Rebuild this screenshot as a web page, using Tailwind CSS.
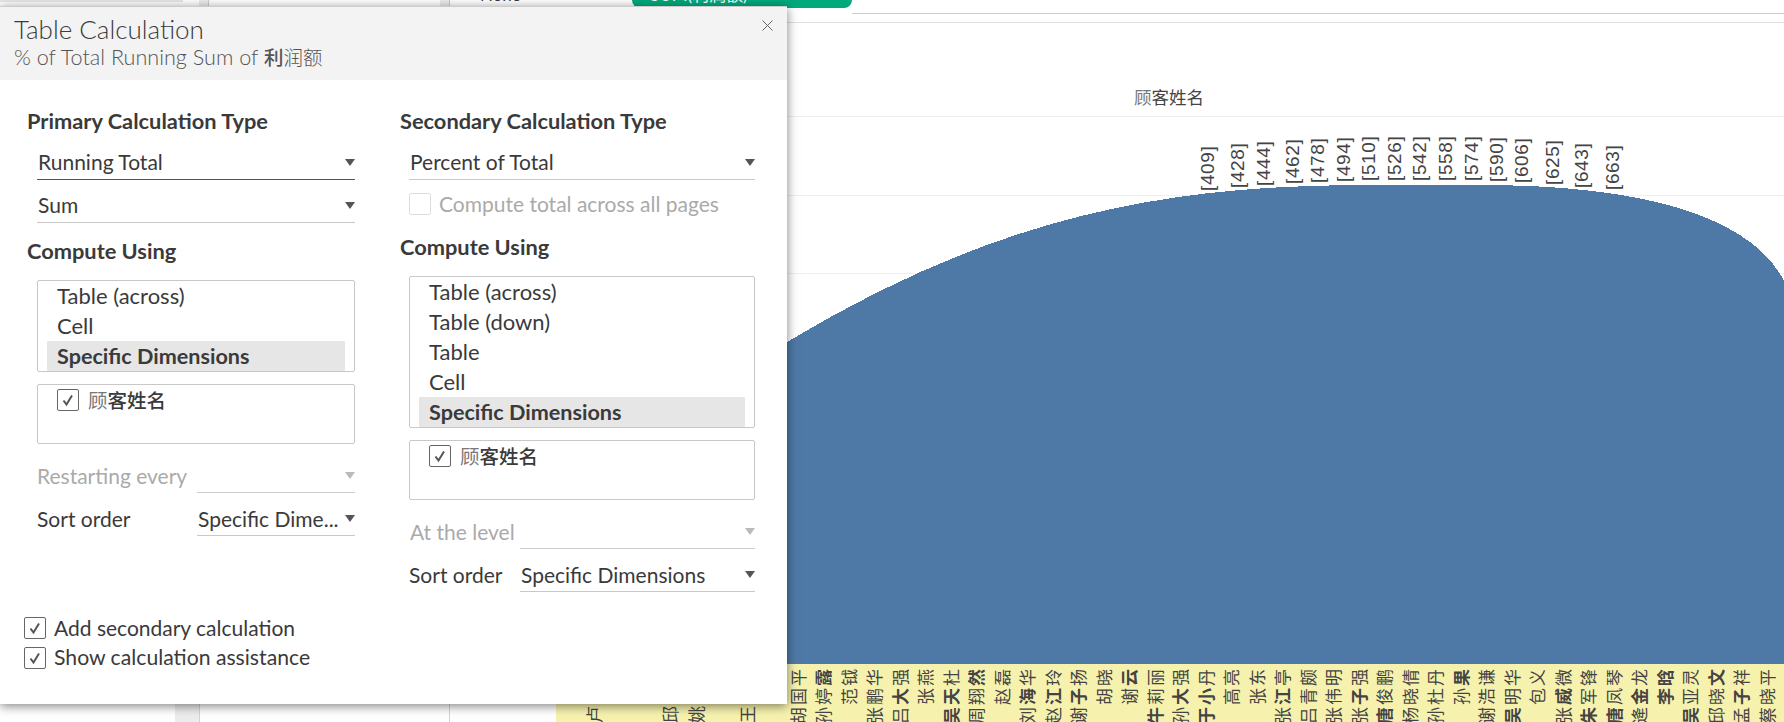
<!DOCTYPE html>
<html lang="en">
<head>
<meta charset="utf-8">
<script src="https://cdn.jsdelivr.net/npm/@tailwindcss/browser@4"></script>
<title>Table Calculation</title>
</head>
<body class="bg-white">
<div class="relative w-[1784px] h-[722px] overflow-hidden bg-white flex flex-col font-['Lato','Noto_Sans_CJK_SC',sans-serif] text-[#3a3a3a]">

  <!-- top strip -->
  <div class="h-[23px] shrink-0 flex border-b border-[#e0e0e0] bg-white">
    <div class="w-[183px] h-[2px] bg-[#e6e6e6]"></div>
    <div class="w-[16px]"></div>
    <div class="w-[10px] h-[6px] bg-[#ececec] border-r border-[#ccc]"></div>
    <div class="w-[231px]"></div>
    <div class="w-[10px] h-[6px] bg-[#ececec] border-r border-[#ccc]"></div>
    <div class="w-[182px] h-[6px] overflow-hidden"><div class="-mt-[15px] ml-[30px] text-[17px] leading-[20px]">None</div></div>
    <div class="w-[220px] h-[8px] overflow-hidden rounded-b-[10px] bg-[#00a97c] text-white"><div class="-mt-[15px] ml-[18px] text-[17px] leading-[20px]">SUM(利润额)</div></div>
    <div class="flex-1 h-[14px] border-b border-[#cfcfcf]"></div>
  </div>

  <!-- workspace -->
  <div class="flex-1 flex min-h-0">
    <div class="w-[175px] bg-white"></div>
    <div class="w-[24px] bg-[#ededed]"></div>
    <div class="w-[251px] bg-white border-l border-r border-[#d4d4d4]"></div>
    <div class="flex-1 flex flex-col min-w-0">
      <svg class="shrink-0 block" width="1334" height="641" viewBox="450 23 1334 641">
        <line x1="787" y1="116.5" x2="1784" y2="116.5" stroke="#efefef"/>
        <line x1="787" y1="195.5" x2="1784" y2="195.5" stroke="#efefef"/>
        <line x1="787" y1="273.5" x2="1784" y2="273.5" stroke="#efefef"/>
        <path shape-rendering="crispEdges" fill="#4e79a7" d="M556 664 L556 520 L787 342 C997 216 1166 185 1366 185 L1480 185 C1640 185 1750 215 1784 281 L1784 664 Z"/>
        <text x="1134" y="104" class="text-[17.5px]" fill="#777">顾<tspan fill="#444">客姓名</tspan></text>
        <g class="text-[19px] tracking-[0.6px] font-['Liberation_Sans',sans-serif]" fill="#444">
          <text transform="translate(1214 191) rotate(-90)">[409]</text>
          <text transform="translate(1244 188) rotate(-90)">[428]</text>
          <text transform="translate(1270 186) rotate(-90)">[444]</text>
          <text transform="translate(1299 184) rotate(-90)">[462]</text>
          <text transform="translate(1324 183) rotate(-90)">[478]</text>
          <text transform="translate(1350 182) rotate(-90)">[494]</text>
          <text transform="translate(1375 181) rotate(-90)">[510]</text>
          <text transform="translate(1401 181) rotate(-90)">[526]</text>
          <text transform="translate(1426 181) rotate(-90)">[542]</text>
          <text transform="translate(1452 181) rotate(-90)">[558]</text>
          <text transform="translate(1478 181) rotate(-90)">[574]</text>
          <text transform="translate(1503 182) rotate(-90)">[590]</text>
          <text transform="translate(1528 183) rotate(-90)">[606]</text>
          <text transform="translate(1559 185) rotate(-90)">[625]</text>
          <text transform="translate(1588 188) rotate(-90)">[643]</text>
          <text transform="translate(1619 190) rotate(-90)">[663]</text>
        </g>
      </svg>

      <!-- name band -->
      <div class="ml-[106px] h-[58px] shrink-0 bg-[#f6f2ae] grid grid-flow-col auto-cols-[25.5px] overflow-hidden items-start justify-items-center text-[17px] leading-[25px] tracking-[2px] text-[#444]">
        <span></span>
        <span class="[writing-mode:vertical-rl] [text-orientation:sideways] rotate-180 text-end h-[90px] w-[25px] pb-[40px] whitespace-nowrap">卢</span>
        <span></span>
        <span></span>
        <span class="[writing-mode:vertical-rl] [text-orientation:sideways] rotate-180 text-end h-[90px] w-[25px] pb-[40px] whitespace-nowrap">邱</span>
        <span class="[writing-mode:vertical-rl] [text-orientation:sideways] rotate-180 text-end h-[90px] w-[25px] pb-[40px] whitespace-nowrap">姚</span>
        <span></span>
        <span class="[writing-mode:vertical-rl] [text-orientation:sideways] rotate-180 text-end h-[90px] w-[25px] pb-[40px] whitespace-nowrap">王</span>
        <span></span>
        <span class="[writing-mode:vertical-rl] [text-orientation:sideways] rotate-180 text-end h-[90px] w-[25px] pb-[3px] whitespace-nowrap">胡国平</span>
        <span class="[writing-mode:vertical-rl] [text-orientation:sideways] rotate-180 text-end h-[90px] w-[25px] pb-[3px] whitespace-nowrap">孙婷<b>露</b></span>
        <span class="[writing-mode:vertical-rl] [text-orientation:sideways] rotate-180 text-end h-[90px] w-[25px] pb-[3px] whitespace-nowrap">范钺</span>
        <span class="[writing-mode:vertical-rl] [text-orientation:sideways] rotate-180 text-end h-[90px] w-[25px] pb-[3px] whitespace-nowrap">张鹏华</span>
        <span class="[writing-mode:vertical-rl] [text-orientation:sideways] rotate-180 text-end h-[90px] w-[25px] pb-[3px] whitespace-nowrap">吕<b>大</b>强</span>
        <span class="[writing-mode:vertical-rl] [text-orientation:sideways] rotate-180 text-end h-[90px] w-[25px] pb-[3px] whitespace-nowrap">张燕</span>
        <span class="[writing-mode:vertical-rl] [text-orientation:sideways] rotate-180 text-end h-[90px] w-[25px] pb-[3px] whitespace-nowrap"><b>吴天</b>杜</span>
        <span class="[writing-mode:vertical-rl] [text-orientation:sideways] rotate-180 text-end h-[90px] w-[25px] pb-[3px] whitespace-nowrap">周翔<b>然</b></span>
        <span class="[writing-mode:vertical-rl] [text-orientation:sideways] rotate-180 text-end h-[90px] w-[25px] pb-[3px] whitespace-nowrap">赵磊</span>
        <span class="[writing-mode:vertical-rl] [text-orientation:sideways] rotate-180 text-end h-[90px] w-[25px] pb-[3px] whitespace-nowrap">刘<b>海</b>华</span>
        <span class="[writing-mode:vertical-rl] [text-orientation:sideways] rotate-180 text-end h-[90px] w-[25px] pb-[3px] whitespace-nowrap">赵<b>江</b>玲</span>
        <span class="[writing-mode:vertical-rl] [text-orientation:sideways] rotate-180 text-end h-[90px] w-[25px] pb-[3px] whitespace-nowrap">谢<b>子</b>扬</span>
        <span class="[writing-mode:vertical-rl] [text-orientation:sideways] rotate-180 text-end h-[90px] w-[25px] pb-[3px] whitespace-nowrap">胡晓</span>
        <span class="[writing-mode:vertical-rl] [text-orientation:sideways] rotate-180 text-end h-[90px] w-[25px] pb-[3px] whitespace-nowrap">谢<b>云</b></span>
        <span class="[writing-mode:vertical-rl] [text-orientation:sideways] rotate-180 text-end h-[90px] w-[25px] pb-[3px] whitespace-nowrap"><b>牛</b>莉丽</span>
        <span class="[writing-mode:vertical-rl] [text-orientation:sideways] rotate-180 text-end h-[90px] w-[25px] pb-[3px] whitespace-nowrap">孙<b>大</b>强</span>
        <span class="[writing-mode:vertical-rl] [text-orientation:sideways] rotate-180 text-end h-[90px] w-[25px] pb-[3px] whitespace-nowrap"><b>于小</b>丹</span>
        <span class="[writing-mode:vertical-rl] [text-orientation:sideways] rotate-180 text-end h-[90px] w-[25px] pb-[3px] whitespace-nowrap">高亮</span>
        <span class="[writing-mode:vertical-rl] [text-orientation:sideways] rotate-180 text-end h-[90px] w-[25px] pb-[3px] whitespace-nowrap">张东</span>
        <span class="[writing-mode:vertical-rl] [text-orientation:sideways] rotate-180 text-end h-[90px] w-[25px] pb-[3px] whitespace-nowrap">张<b>江</b>亭</span>
        <span class="[writing-mode:vertical-rl] [text-orientation:sideways] rotate-180 text-end h-[90px] w-[25px] pb-[3px] whitespace-nowrap">吕青颇</span>
        <span class="[writing-mode:vertical-rl] [text-orientation:sideways] rotate-180 text-end h-[90px] w-[25px] pb-[3px] whitespace-nowrap">张伟明</span>
        <span class="[writing-mode:vertical-rl] [text-orientation:sideways] rotate-180 text-end h-[90px] w-[25px] pb-[3px] whitespace-nowrap">张<b>子</b>强</span>
        <span class="[writing-mode:vertical-rl] [text-orientation:sideways] rotate-180 text-end h-[90px] w-[25px] pb-[3px] whitespace-nowrap"><b>唐</b>俊鹏</span>
        <span class="[writing-mode:vertical-rl] [text-orientation:sideways] rotate-180 text-end h-[90px] w-[25px] pb-[3px] whitespace-nowrap">杨晓倩</span>
        <span class="[writing-mode:vertical-rl] [text-orientation:sideways] rotate-180 text-end h-[90px] w-[25px] pb-[3px] whitespace-nowrap">孙杜丹</span>
        <span class="[writing-mode:vertical-rl] [text-orientation:sideways] rotate-180 text-end h-[90px] w-[25px] pb-[3px] whitespace-nowrap">孙<b>果</b></span>
        <span class="[writing-mode:vertical-rl] [text-orientation:sideways] rotate-180 text-end h-[90px] w-[25px] pb-[3px] whitespace-nowrap">谢浩谦</span>
        <span class="[writing-mode:vertical-rl] [text-orientation:sideways] rotate-180 text-end h-[90px] w-[25px] pb-[3px] whitespace-nowrap"><b>吴</b>明华</span>
        <span class="[writing-mode:vertical-rl] [text-orientation:sideways] rotate-180 text-end h-[90px] w-[25px] pb-[3px] whitespace-nowrap">包义</span>
        <span class="[writing-mode:vertical-rl] [text-orientation:sideways] rotate-180 text-end h-[90px] w-[25px] pb-[3px] whitespace-nowrap">张<b>威</b>微</span>
        <span class="[writing-mode:vertical-rl] [text-orientation:sideways] rotate-180 text-end h-[90px] w-[25px] pb-[3px] whitespace-nowrap"><b>朱</b>军锋</span>
        <span class="[writing-mode:vertical-rl] [text-orientation:sideways] rotate-180 text-end h-[90px] w-[25px] pb-[3px] whitespace-nowrap"><b>唐</b>凤琴</span>
        <span class="[writing-mode:vertical-rl] [text-orientation:sideways] rotate-180 text-end h-[90px] w-[25px] pb-[3px] whitespace-nowrap">逄<b>金</b>龙</span>
        <span class="[writing-mode:vertical-rl] [text-orientation:sideways] rotate-180 text-end h-[90px] w-[25px] pb-[3px] whitespace-nowrap"><b>李晗</b></span>
        <span class="[writing-mode:vertical-rl] [text-orientation:sideways] rotate-180 text-end h-[90px] w-[25px] pb-[3px] whitespace-nowrap"><b>吴</b>亚灵</span>
        <span class="[writing-mode:vertical-rl] [text-orientation:sideways] rotate-180 text-end h-[90px] w-[25px] pb-[3px] whitespace-nowrap">邱晓<b>文</b></span>
        <span class="[writing-mode:vertical-rl] [text-orientation:sideways] rotate-180 text-end h-[90px] w-[25px] pb-[3px] whitespace-nowrap">孟<b>子</b>祥</span>
        <span class="[writing-mode:vertical-rl] [text-orientation:sideways] rotate-180 text-end h-[90px] w-[25px] pb-[3px] whitespace-nowrap">蔡晓平</span>
      </div>
    </div>
  </div>

  <!-- dialog overlay -->
  <div class="absolute left-0 top-[6px] w-[787px] h-[698px] bg-white border-t border-[#ccc] shadow-[0_2px_10px_rgba(0,0,0,0.5)] flex flex-col">
    <div class="relative h-[73px] shrink-0 bg-[#f3f3f3] pl-[14px] pt-[6px]">
      <div class="text-[26px] leading-[32px] font-light text-[#3a3a3a]">Table Calculation</div>
      <div class="text-[21.6px] leading-[25px] font-light text-[#555] whitespace-nowrap">% of Total Running Sum of <b class="font-medium text-[19.5px]">利</b><span class="text-[19.5px]">润额</span></div>
      <svg class="absolute left-[762px] top-[13px]" width="11" height="11" viewBox="0 0 11 11"><path d="M0.5 0.5L10.5 10.5M10.5 0.5L0.5 10.5" stroke="#666" stroke-width="1" fill="none"/></svg>
    </div>

    <div class="flex h-[512px] shrink-0 pl-[27px] pt-[29px] text-[21px]">
      <!-- left column -->
      <div class="w-[373px] shrink-0">
        <div class="h-[24px] leading-[24px] font-bold text-[21.8px] whitespace-nowrap">Primary Calculation Type</div>
        <div class="mt-[16px] ml-[10px] w-[318px] h-[31px] border-b border-[#555] flex items-center justify-between pl-[1px] pb-[4px]">
          <span>Running Total</span>
          <svg width="10" height="7" viewBox="0 0 10 7"><path d="M0 0H10L5 7Z" fill="#555"/></svg>
        </div>
        <div class="mt-[12px] ml-[10px] w-[318px] h-[31px] border-b border-[#c8c8c8] flex items-center justify-between pl-[1px] pb-[4px]">
          <span>Sum</span>
          <svg width="10" height="7" viewBox="0 0 10 7"><path d="M0 0H10L5 7Z" fill="#555"/></svg>
        </div>
        <div class="mt-[16px] h-[24px] leading-[24px] font-bold text-[21.8px]">Compute Using</div>
        <div class="mt-[17px] ml-[10px] w-[318px] h-[92px] border border-[#c8c8c8] rounded-[2px] px-[9px] text-[22px]">
          <div class="h-[30px] pl-[10px] leading-[30px]">Table (across)</div>
          <div class="h-[30px] pl-[10px] leading-[30px]">Cell</div>
          <div class="h-[30px] pl-[10px] leading-[30px] font-bold text-[21.6px] bg-[#e6e6e6]">Specific Dimensions</div>
        </div>
        <div class="mt-[12px] ml-[10px] w-[318px] h-[60px] border border-[#c8c8c8] rounded-[2px] pl-[19px] pt-[4px] flex items-start gap-[9px]">
          <span class="w-[22px] h-[22px] border border-[#666] rounded-[2px] flex items-center justify-center shrink-0"><svg width="14" height="14" viewBox="0 0 14 14"><path d="M2.5 7.5L5.5 11.5L11 2.5" stroke="#555" stroke-width="2" fill="none"/></svg></span>
          <span class="text-[19.5px] leading-[24px]"><span class="text-[#777]">顾</span><span class="font-medium">客姓名</span></span>
        </div>
        <div class="mt-[18px] ml-[10px] w-[318px] h-[31px] flex items-center text-[#aaa]">
          <span class="w-[160px] pb-[4px]">Restarting every</span>
          <div class="flex-1 h-[31px] border-b border-[#ccc] flex items-center justify-end pb-[3px]"><svg width="10" height="7" viewBox="0 0 10 7"><path d="M0 0H10L5 7Z" fill="#bbb"/></svg></div>
        </div>
        <div class="mt-[12px] ml-[10px] w-[318px] h-[31px] flex items-center">
          <span class="w-[160px] pb-[3px]">Sort order</span>
          <div class="flex-1 h-[31px] border-b border-[#c8c8c8] flex items-center justify-between pl-[1px] pb-[3px]"><span class="whitespace-nowrap">Specific Dime...</span><svg width="10" height="7" viewBox="0 0 10 7"><path d="M0 0H10L5 7Z" fill="#555"/></svg></div>
        </div>
      </div>

      <!-- right column -->
      <div class="w-[360px] shrink-0">
        <div class="h-[24px] leading-[24px] font-bold text-[21.8px] whitespace-nowrap">Secondary Calculation Type</div>
        <div class="mt-[16px] ml-[9px] w-[346px] h-[31px] border-b border-[#c8c8c8] flex items-center justify-between pl-[1px] pb-[4px]">
          <span>Percent of Total</span>
          <svg width="10" height="7" viewBox="0 0 10 7"><path d="M0 0H10L5 7Z" fill="#555"/></svg>
        </div>
        <div class="mt-[13px] ml-[9px] h-[22px] flex items-center gap-[8px] text-[#aaa] whitespace-nowrap">
          <span class="w-[22px] h-[22px] border border-[#ddd] rounded-[2px] shrink-0"></span>
          <span>Compute total across all pages</span>
        </div>
        <div class="mt-[20px] h-[24px] leading-[24px] font-bold text-[21.8px]">Compute Using</div>
        <div class="mt-[17px] ml-[9px] w-[346px] h-[152px] border border-[#c8c8c8] rounded-[2px] px-[9px] text-[22px]">
          <div class="h-[30px] pl-[10px] leading-[30px]">Table (across)</div>
          <div class="h-[30px] pl-[10px] leading-[30px]">Table (down)</div>
          <div class="h-[30px] pl-[10px] leading-[30px]">Table</div>
          <div class="h-[30px] pl-[10px] leading-[30px]">Cell</div>
          <div class="h-[30px] pl-[10px] leading-[30px] font-bold text-[21.6px] bg-[#e6e6e6]">Specific Dimensions</div>
        </div>
        <div class="mt-[12px] ml-[9px] w-[346px] h-[60px] border border-[#c8c8c8] rounded-[2px] pl-[19px] pt-[4px] flex items-start gap-[9px]">
          <span class="w-[22px] h-[22px] border border-[#666] rounded-[2px] flex items-center justify-center shrink-0"><svg width="14" height="14" viewBox="0 0 14 14"><path d="M2.5 7.5L5.5 11.5L11 2.5" stroke="#555" stroke-width="2" fill="none"/></svg></span>
          <span class="text-[19.5px] leading-[24px]"><span class="text-[#777]">顾</span><span class="font-medium">客姓名</span></span>
        </div>
        <div class="mt-[18px] ml-[9px] w-[346px] h-[31px] flex items-center text-[#aaa]">
          <span class="w-[111px] pl-[1px] pb-[3px]">At the level</span>
          <div class="flex-1 h-[31px] border-b border-[#ccc] flex items-center justify-end pb-[3px]"><svg width="10" height="7" viewBox="0 0 10 7"><path d="M0 0H10L5 7Z" fill="#bbb"/></svg></div>
        </div>
        <div class="mt-[12px] ml-[9px] w-[346px] h-[31px] flex items-center">
          <span class="w-[111px] pb-[3px]">Sort order</span>
          <div class="flex-1 h-[31px] border-b border-[#c8c8c8] flex items-center justify-between pl-[1px] pb-[3px]"><span class="whitespace-nowrap">Specific Dimensions</span><svg width="10" height="7" viewBox="0 0 10 7"><path d="M0 0H10L5 7Z" fill="#555"/></svg></div>
        </div>
      </div>
    </div>

    <!-- footer options -->
    <div class="mt-[25px] pl-[24px] flex flex-col gap-[8px] text-[21px]">
      <div class="h-[22px] flex items-center gap-[8px]">
        <span class="w-[22px] h-[22px] border border-[#666] rounded-[2px] flex items-center justify-center shrink-0"><svg width="14" height="14" viewBox="0 0 14 14"><path d="M2.5 7.5L5.5 11.5L11 2.5" stroke="#555" stroke-width="2" fill="none"/></svg></span>
        <span>Add secondary calculation</span>
      </div>
      <div class="h-[22px] flex items-center gap-[8px]">
        <span class="w-[22px] h-[22px] border border-[#666] rounded-[2px] flex items-center justify-center shrink-0"><svg width="14" height="14" viewBox="0 0 14 14"><path d="M2.5 7.5L5.5 11.5L11 2.5" stroke="#555" stroke-width="2" fill="none"/></svg></span>
        <span class="text-[21.2px]">Show calculation assistance</span>
      </div>
    </div>
  </div>
</div>
</body>
</html>
